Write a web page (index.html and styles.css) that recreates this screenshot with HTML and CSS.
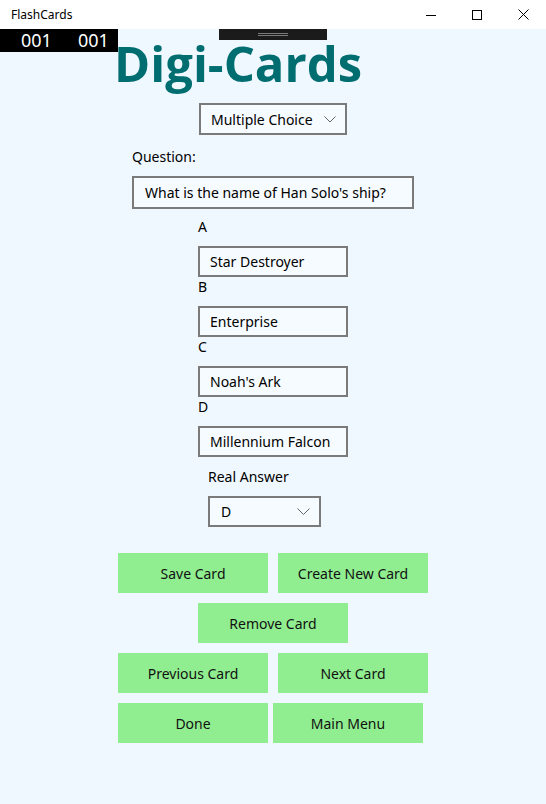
FILE: index.html
```html
<!DOCTYPE html>
<html>
<head>
<meta charset="utf-8">
<title>FlashCards</title>
<link rel="stylesheet" href="styles.css">
</head>
<body>
<header class="titlebar">
  <span class="app-name">FlashCards</span>
  <div class="win-controls">
    <span class="win-btn"><svg width="10" height="10" viewBox="0 0 10 10"><line x1="0" y1="5.5" x2="10" y2="5.5" stroke="#000" stroke-width="1"/></svg></span>
    <span class="win-btn"><svg width="10" height="10" viewBox="0 0 10 10"><rect x="0.5" y="0.5" width="9" height="9" fill="none" stroke="#000" stroke-width="1"/></svg></span>
    <span class="win-btn"><svg width="11" height="11" viewBox="0 0 11 11"><path d="M0.5 0.5 L10.5 10.5 M10.5 0.5 L0.5 10.5" stroke="#000" stroke-width="1"/></svg></span>
  </div>
</header>

<main class="app">
  <div class="frame-counter"><span>001</span><span>001</span></div>
  <div class="drag-handle"><span class="grip"></span></div>

  <h1 class="title">Digi-Cards</h1>

  <div class="combo combo-type">
    <span>Multiple Choice</span>
    <svg class="chev" width="12" height="7" viewBox="0 0 12 7"><polyline points="0.5,0.5 6,6 11.5,0.5" fill="none" stroke="#666" stroke-width="1"/></svg>
  </div>

  <section class="question">
    <label class="label">Question:</label>
    <div class="textbox textbox-q">What is the name of Han Solo's ship?</div>
  </section>

  <section class="options">
    <label class="label">A</label>
    <div class="textbox textbox-opt">Star Destroyer</div>
    <label class="label">B</label>
    <div class="textbox textbox-opt">Enterprise</div>
    <label class="label">C</label>
    <div class="textbox textbox-opt">Noah's Ark</div>
    <label class="label">D</label>
    <div class="textbox textbox-opt">Millennium Falcon</div>

    <div class="answer">
      <label class="label">Real Answer</label>
      <div class="combo combo-answer">
        <span>D</span>
        <svg class="chev" width="13" height="7" viewBox="0 0 13 7"><polyline points="0.5,0.5 6.5,6.5 12.5,0.5" fill="none" stroke="#666" stroke-width="1"/></svg>
      </div>
    </div>
  </section>

  <section class="actions">
    <div class="row"><button class="btn">Save Card</button><button class="btn">Create New Card</button></div>
    <div class="row row-center"><button class="btn">Remove Card</button></div>
    <div class="row"><button class="btn">Previous Card</button><button class="btn">Next Card</button></div>
    <div class="row row-tight"><button class="btn">Done</button><button class="btn">Main Menu</button></div>
  </section>
</main>
</body>
</html>
```

FILE: styles.css
```css
* { box-sizing: border-box; }

html, body {
  margin: 0;
  padding: 0;
}

body {
  width: 546px;
  height: 804px;
  background: #f0f8ff;
  font-family: "Noto Sans", "Open Sans", sans-serif;
  font-size: 14px;
  color: #000;
  overflow: hidden;
}

.titlebar {
  height: 29px;
  background: #fff;
  display: flex;
  align-items: center;
  justify-content: space-between;
}

.app-name {
  font-size: 12px;
  padding-left: 11px;
  color: #000;
}

.win-controls {
  display: flex;
  height: 29px;
}

.win-btn {
  width: 46px;
  height: 29px;
  display: flex;
  align-items: center;
  justify-content: center;
}

.app {
  position: relative;
  display: flex;
  flex-direction: column;
  align-items: center;
  height: 775px;
}

.frame-counter {
  position: absolute;
  left: 0;
  top: 0;
  width: 118px;
  height: 23px;
  background: #000;
  color: #fff;
  font-size: 18px;
  line-height: 23px;
  display: flex;
  gap: 26px;
  padding-left: 21px;
  z-index: 2;
}

.drag-handle {
  position: absolute;
  left: 219px;
  top: 0;
  width: 108px;
  height: 11px;
  background: #1b1b1b;
  display: flex;
  justify-content: center;
  align-items: center;
  z-index: 2;
}

.grip {
  display: block;
  width: 30px;
  height: 3px;
  border-top: 1px solid #7a7a7a;
  border-bottom: 1px solid #7a7a7a;
}

.title {
  align-self: flex-start;
  margin: 2px 0 0 114px;
  font-family: "Open Sans", "Noto Sans", sans-serif;
  font-weight: 700;
  font-size: 49px;
  line-height: 64px;
  color: #006d70;
}

.combo {
  display: flex;
  align-items: center;
  justify-content: space-between;
  border: 2px solid #7a7a7a;
  background: #f6fbff;
  padding: 0 9px 0 10px;
}

.combo-type {
  margin-top: 8px;
  width: 148px;
  height: 32px;
}

.label {
  display: block;
  height: 20px;
  line-height: 20px;
}

.question {
  width: 282px;
  margin-top: 12px;
}

.question .label {
  margin-bottom: 9px;
}

.textbox {
  border: 2px solid #7a7a7a;
  background: #f6fbff;
  display: flex;
  align-items: center;
  white-space: nowrap;
}

.textbox-q {
  height: 33px;
  padding-left: 11px;
}

.options {
  width: 150px;
  margin-top: 8px;
}

.options > .label {
  margin-bottom: 9px;
}

.textbox-opt {
  height: 31px;
  padding-left: 10px;
}

.answer {
  margin: 10px 0 0 10px;
}

.answer .label {
  margin-bottom: 9px;
}

.combo-answer {
  width: 113px;
  height: 31px;
  padding: 0 9px 0 11px;
}

.actions {
  width: 310px;
  margin-top: 26px;
  display: flex;
  flex-direction: column;
  gap: 10px;
}

.row {
  display: flex;
  gap: 10px;
}

.row-center {
  justify-content: center;
}

.row-tight {
  gap: 5px;
}

.btn {
  width: 150px;
  height: 40px;
  border: none;
  background: #90ee90;
  font-family: inherit;
  font-size: 14px;
  color: #111;
  padding: 0;
}
```
